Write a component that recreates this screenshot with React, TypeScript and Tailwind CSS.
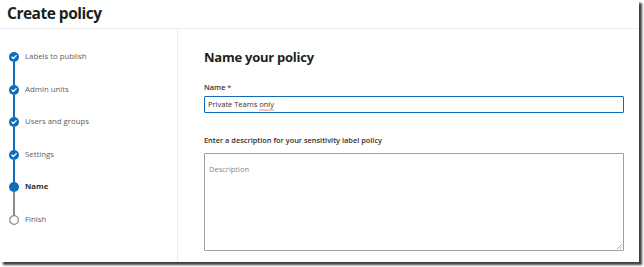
import React from 'react';

type Step = { label: string; state: 'done' | 'current' | 'todo' };

const steps: Step[] = [
  { label: 'Labels to publish', state: 'done' },
  { label: 'Admin units', state: 'done' },
  { label: 'Users and groups', state: 'done' },
  { label: 'Settings', state: 'done' },
  { label: 'Name', state: 'current' },
  { label: 'Finish', state: 'todo' },
];

const StepDot = ({ state }: { state: Step['state'] }) => {
  if (state === 'done') {
    return (
      <svg width="10" height="10" viewBox="0 0 10 10">
        <circle cx="5" cy="5" r="5" fill="#0f6cbd" />
        <path d="M2.8 5.1 L4.3 6.5 L7.2 3.6" stroke="#fff" strokeWidth="1.3" fill="none" strokeLinecap="round" strokeLinejoin="round" />
      </svg>
    );
  }
  if (state === 'current') {
    return (
      <svg width="10" height="10" viewBox="0 0 10 10">
        <circle cx="5" cy="5" r="5" fill="#0f6cbd" />
      </svg>
    );
  }
  return (
    <svg width="10" height="10" viewBox="0 0 10 10">
      <circle cx="5" cy="5" r="4.3" fill="#fff" stroke="#8a8a8a" strokeWidth="1.2" />
    </svg>
  );
};

const App: React.FC = () => {
  return (
    <div className="w-[644px] h-[267px] bg-white" style={{ fontFamily: '"Open Sans", "Noto Sans", sans-serif' }}>
      <div className="w-[639px] h-[262px] bg-white flex flex-col shadow-[3px_3px_2px_rgba(0,0,0,0.75)] overflow-hidden">
        {/* Header */}
        <div className="h-[29px] border-b border-[#ececec] flex items-center px-[7px]">
          <h1 className="text-[15.5px] font-bold text-[#201f1e] tracking-[-0.5px] leading-none">Create policy</h1>
        </div>

        <div className="flex flex-1">
          {/* Steps */}
          <div className="w-[178px] border-r border-[#ececec] pt-[23px] pl-[9px]">
            {steps.map((s, i) => {
              const next = steps[i + 1];
              const lineBlue = s.state === 'done';
              return (
                <div key={s.label}>
                  <div className="flex items-center h-[10px]">
                    <StepDot state={s.state} />
                    <span
                      className={`ml-[6px] text-[7.8px] leading-none ${
                        s.state === 'current' ? 'font-bold text-[#323130]' : 'text-[#5f5d5b]'
                      }`}
                    >
                      {s.label}
                    </span>
                  </div>
                  {next && (
                    <div className={`ml-[4px] w-[1.5px] h-[22.6px] ${lineBlue ? 'bg-[#0f6cbd]' : 'bg-[#8a8a8a]'}`} />
                  )}
                </div>
              );
            })}
          </div>

          {/* Form */}
          <div className="flex-1 pl-[26px] pr-[15px] pt-[22px]">
            <h2 className="text-[13px] font-bold text-[#201f1e] leading-none tracking-[-0.25px]">Name your policy</h2>
            <div className="mt-[20px] text-[7.4px] font-semibold text-[#323130] leading-none">
              Name <span className="text-[#a4262c]">*</span>
            </div>
            <div className="mt-[5px] h-[17px] border-[1.5px] border-[#0f6cbd] rounded-[1px] flex items-center px-[3px]">
              <span className="text-[7.5px] text-[#323130] leading-none">
                Private Teams{' '}
                <span className="relative">
                  only
                  <svg className="absolute left-0 -bottom-[2px]" width="15" height="2" viewBox="0 0 15 2">
                    <path d="M0 1.5 L1 0.5 L2 1.5 L3 0.5 L4 1.5 L5 0.5 L6 1.5 L7 0.5 L8 1.5 L9 0.5 L10 1.5 L11 0.5 L12 1.5 L13 0.5 L14 1.5 L15 0.5" stroke="#d13438" strokeWidth="0.6" fill="none" />
                  </svg>
                </span>
              </span>
            </div>
            <div className="mt-[24px] text-[7.4px] font-semibold text-[#323130] leading-none">
              Enter a description for your sensitivity label policy
            </div>
            <div className="mt-[8px] h-[98px] border border-[#a0a0a0] rounded-[1px] relative px-[4px] pt-[4px] leading-none">
              <span className="text-[7.5px] text-[#8a8886] leading-none">Description</span>
              <svg className="absolute right-[1px] bottom-[1px]" width="5" height="5" viewBox="0 0 5 5">
                <path d="M5 0 L0 5 M5 2.5 L2.5 5" stroke="#999" strokeWidth="0.8" />
              </svg>
            </div>
          </div>
        </div>
      </div>
    </div>
  );
};

export default App;
